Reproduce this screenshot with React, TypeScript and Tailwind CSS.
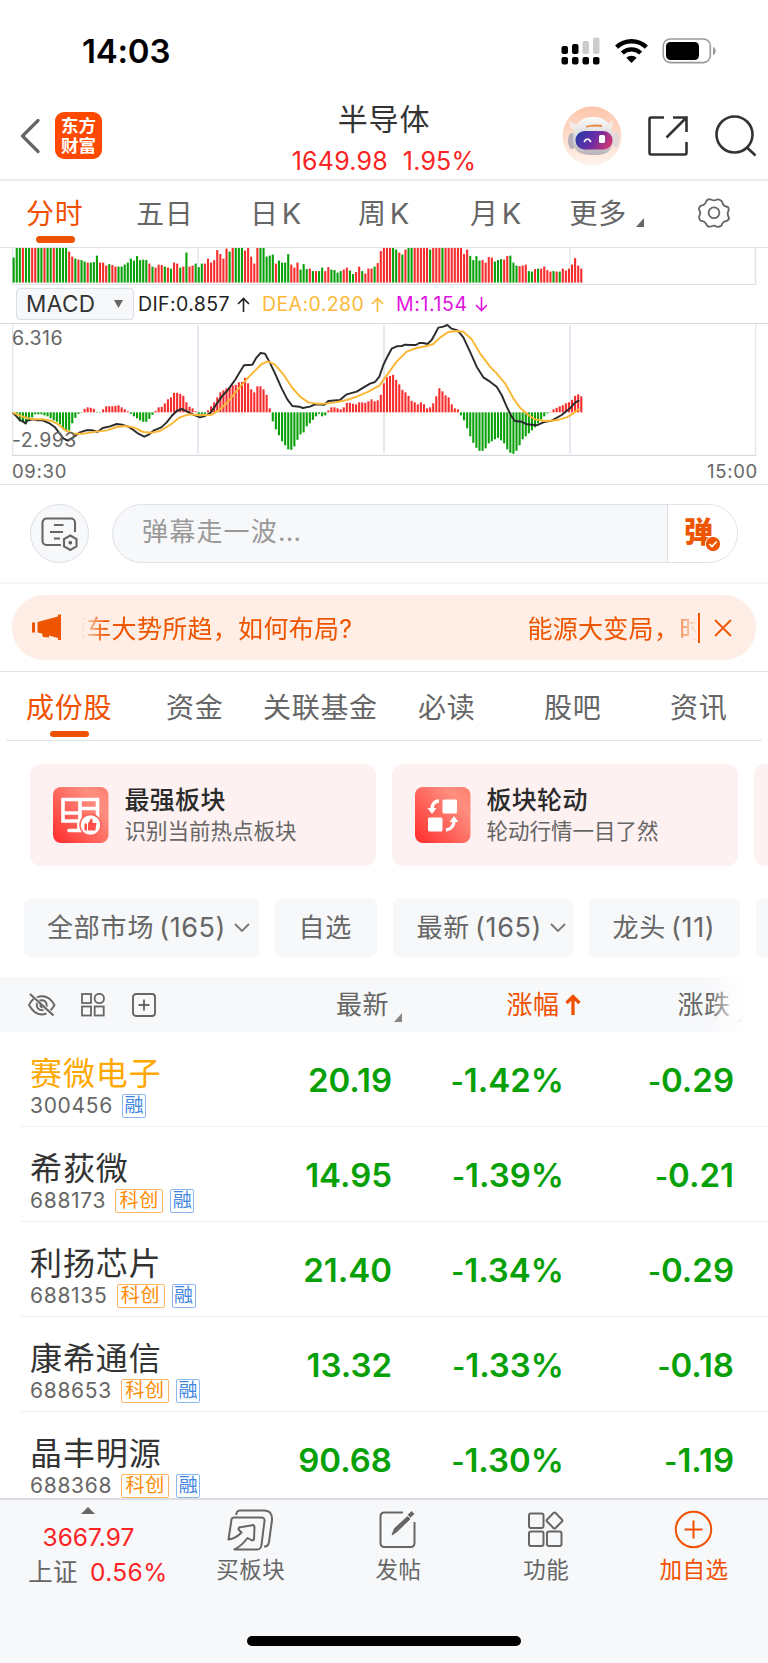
import React from 'react';

type Dir = 'R' | 'G';

const BAR_STEP = 3.085;
const CHART_LEFT = 12.6;

// Height in px for every minute of the session, clipped at the top edge
const VOLUME_HEIGHTS = [
  25, 36, 36, 36, 36, 36, 36, 36, 36, 36, 36, 36, 36, 36, 36, 36, 36, 36, 31, 26, 24, 23, 22.5, 21, 20, 20, 20.5, 27,
  20, 20, 17, 18.5, 17.5, 16, 16, 16, 18, 20, 24, 22, 26.5, 22.5, 23, 22.5, 19, 16, 15, 18, 17.5, 16, 15, 14, 20, 19,
  15, 16, 30, 16, 17, 19, 15.5, 19, 19, 24, 20, 22.5, 32.5, 28.5, 24, 34, 31, 36, 36, 36, 36, 32, 36, 26, 19, 36, 36,
  36, 26, 27, 28, 19, 22, 20, 20, 28.5, 18, 15, 20, 13, 18.5, 13.5, 14, 11.5, 11.5, 11.5, 15, 11.5, 15.5, 13, 12.5,
  10, 11.5, 13, 15, 12, 8.5, 10.5, 16, 11.5, 9, 14, 14, 16, 19.5, 31.5, 36, 36, 36, 36, 33, 30, 28, 33, 36, 36, 36,
  36, 36, 36, 36, 33, 36, 36, 36, 36, 36, 36, 36, 36, 36, 36, 28.5, 33, 26.5, 22.5, 26.5, 22, 22.5, 20, 25.5, 25, 21,
  22.5, 23.5, 23, 26.5, 27, 20, 17, 16.5, 17, 18, 11.5, 11, 13.5, 14, 14, 16, 12.5, 11, 11.5, 11, 11, 14, 12, 14, 18,
  24.5, 17, 14,
];
const VOLUME_DIRS =
  'GGGRGGRRGGRGGRGGGG' +
  'RRGRGGRGGGRRRGRRGGGGGGGGGG' +
  'RGRRRGRGRRGRGRRGGGRRRRRRRRGRGGGRRRRRGGGGGRGGGGRRR' +
  'GGGRGRGGRRGGGGRRGGRRGRRRGRRRRRGGRGRGGRRRRRGRRRGRRRRRRR' +
  'RGGGGRRRRGGGRRGGGRRRGGRGRRRRGRGRRRRRRRG';

const MACD_BARS = [
  0, -2, -9, -10, -12, -9, -5, -2, -2, -2, -3, -4, -6, -8, -9.5, -12, -17, -19, -18, -11, -5.5, -1.5, 0, 3.5, 5, 4.5,
  3.5, 0, 0, 3, 6, 6, 6, 6.5, 7, 5, 3, 1, -1.5, -4, -6, -8, -9.5, -9.5, -6.5, -2.5, 1.5, 5, 5.5, 9, 13, 15, 19.5,
  19.5, 18.5, 16.5, 10, 5.5, 4, 1, -2, -2.5, -1.5, 2, 6, 10, 15, 20, 22, 24, 25, 27, 27.5, 30, 30.5, 34.5, 29, 23, 20,
  26, 26, 23, 17.5, 4, -9, -17, -23, -29, -33, -37, -37.5, -34, -27.5, -22, -20, -14, -11, -7.5, -4, -1.5, -4, -3, 2,
  5, 5, 4, 3, 5, 9.5, 9.5, 8.5, 8, 10, 10, 9.5, 11, 13, 11, 12, 17.5, 29, 35, 36.5, 37.5, 32.5, 28, 22.5, 20, 16.5,
  11.5, 10, 8, 10, 8, 4, 5, 9, 16, 24, 21, 17, 15, 8, 4, 3, -3, -8, -16, -24, -30.5, -35.5, -38.5, -38.5, -36, -31,
  -29, -27, -25.5, -28, -31, -37, -40.5, -41.5, -38.5, -33, -27, -24, -21, -18, -15, -11, -7, -4, -1, 0.5, 3, 4.5, 6,
  7, 9, 10, 12.5, 16.5, 18, 16,
];

// Both curves are plotted on a 3x grid
const DIF_LINE =
  '38,266 50,278 60,289 68,291 75,298 83,289 100,286 112,289 128,289 150,299 165,310 180,330 190,343 203,350 220,340 240,325 258,319 278,319 292,324 308,312 330,307 350,300 366,302 385,308 400,318 415,329 433,338 448,331 462,319 484,310 500,295 515,276 530,261 545,255 560,262 580,272 600,280 615,276 632,266 650,240 665,218 685,196 705,168 720,143 732,124 757,122 770,100 782,87 795,89 808,113 825,148 845,193 862,226 877,246 898,248 908,252 930,248 945,241 973,242 985,231 1020,228 1040,211 1070,203 1095,188 1110,179 1125,174 1138,158 1150,123 1162,98 1175,74 1190,67 1205,66 1215,62 1232,63 1248,63 1258,57 1270,57 1282,60 1295,48 1305,30 1315,11 1330,8 1342,3 1355,14 1373,19 1390,40 1410,83 1430,128 1450,160 1470,173 1490,188 1505,213 1520,248 1535,278 1545,291 1565,293 1580,301 1610,304 1630,295 1655,290 1685,273 1710,253 1725,236 1738,229';
const DEA_LINE =
  '38,266 60,275 80,282 100,286 130,286 155,291 175,301 195,318 220,329 250,329 290,323 320,319 350,309 375,306 400,310 430,324 455,326 480,321 510,303 540,280 565,271 600,274 635,272 655,260 680,238 700,213 725,183 745,160 765,140 785,120 803,112 825,122 850,151 875,189 900,218 925,235 950,239 975,239 1005,235 1040,228 1070,218 1105,203 1138,185 1160,154 1190,113 1220,83 1250,72 1280,66 1300,60 1320,41 1345,24 1370,21 1390,23 1415,46 1440,88 1470,128 1490,148 1515,178 1540,223 1560,251 1585,273 1605,286 1635,291 1670,289 1700,280 1720,268 1738,254';

const STOCKS = [
  { name: '赛微电子', code: '300456', star: false, held: true, price: '20.19', pct: '1.42%', diff: '0.29' },
  { name: '希荻微', code: '688173', star: true, held: false, price: '14.95', pct: '1.39%', diff: '0.21' },
  { name: '利扬芯片', code: '688135', star: true, held: false, price: '21.40', pct: '1.34%', diff: '0.29' },
  { name: '康希通信', code: '688653', star: true, held: false, price: '13.32', pct: '1.33%', diff: '0.18' },
  { name: '晶丰明源', code: '688368', star: true, held: false, price: '90.68', pct: '1.30%', diff: '1.19' },
];

export default function App() {
  return (
    <div className="flex h-[1663px] w-[768px] flex-col overflow-hidden bg-white font-['Inter','Noto_Sans_CJK_SC',sans-serif] text-[#666]">
      <StatusBar />
      <Header />
      <PeriodTabs />
      <VolumeChart />
      <MacdLegend />
      <MacdChart />
      <div className="flex h-[29px] shrink-0 items-center justify-between border-b border-[#e2e4e9] pl-3 pr-[10px] pt-[2px] text-[18.5px] leading-none tracking-[0.7px]">
        <span>09:30</span>
        <span>15:00</span>
      </div>
      <DanmuBar />
      <Notice />
      <SectionTabs />
      <Cards />
      <Filters />
      <TableHead />
      <div className="h-[466px] shrink-0 overflow-hidden">
        {STOCKS.map((s) => (
          <StockRow key={s.code} stock={s} />
        ))}
      </div>
      <BottomBar />
    </div>
  );
}

// ── Top area ──────────────────────────────────────────────────────────────────

function StatusBar() {
  return (
    <div className="flex h-24 shrink-0 items-start justify-between pl-[82px] pr-[51px] pt-9">
      <span className="text-[33px] font-semibold leading-[31px] tracking-[-0.2px] text-black">14:03</span>
      <div className="flex">
        <svg width="40" height="30" viewBox="0 0 40 30" className="mr-3.5">
          <rect x="0.5" y="10" width="6.5" height="8" rx="2" fill="#000" />
          <rect x="11" y="8" width="6.5" height="10" rx="2" fill="#000" />
          <rect x="21.5" y="5" width="6.5" height="13" rx="2" fill="#ccc" />
          <rect x="32" y="1.5" width="6.5" height="16.5" rx="2" fill="#ccc" />
          {[0.5, 11, 21.5, 32].map((x) => (
            <rect key={x} x={x} y="21" width="6.5" height="7.5" rx="2" fill="#000" />
          ))}
        </svg>
        <svg width="33" height="30" viewBox="0 0 33 30" className="mr-3.5">
          <g fill="none" stroke="#000" strokeWidth="4.4">
            <path d="M1.6 11.2a21.5 21.5 0 0 1 29.8 0" />
            <path d="M7.3 17a13.4 13.4 0 0 1 18.4 0" />
          </g>
          <path d="M16.5 27l-5.2-5.2a7.4 7.4 0 0 1 10.4 0z" fill="#000" />
        </svg>
        <svg width="55" height="30" viewBox="0 0 55 30">
          <rect x="1.3" y="3" width="47" height="23.6" rx="7" fill="none" stroke="#999" strokeWidth="1.6" />
          <rect x="4" y="6" width="33" height="18" rx="4.5" fill="#000" />
          <path d="M51 11c3.6 1 3.6 7 0 8z" fill="#999" />
        </svg>
      </div>
    </div>
  );
}

function Header() {
  return (
    <div className="flex h-[85px] shrink-0 items-start border-b-2 border-[#ececee]">
      <svg width="20" height="36" viewBox="0 0 20 36" className="ml-5 mt-[22px]">
        <path d="M18 2.5L2.5 18L18 33.5" fill="none" stroke="#666" strokeWidth="3.2" strokeLinecap="round" strokeLinejoin="round" />
      </svg>
      <div className="ml-[15px] mt-4 flex size-[47px] flex-col items-center justify-center rounded-[9px] bg-[#ff4800] text-[17.5px] font-bold leading-[19.5px] text-white">
        <span>东方</span>
        <span>财富</span>
      </div>
      <div className="ml-[172px] flex w-[220px] flex-col items-center">
        <span className="mt-2 text-[30px] leading-[31px] tracking-[0.8px] text-[#333]">半导体</span>
        <span className="mt-3 text-[25px] leading-[28px] tracking-[0.2px] text-[#fb2323]">
          1649.98<span className="ml-[15px]">1.95%</span>
        </span>
      </div>
      <Robot />
      <svg width="42" height="42" viewBox="0 0 42 42" className="ml-[25px] mt-[19px]" fill="none" stroke="#333" strokeWidth="2.6">
        <path d="M17 2.5H4a1.5 1.5 0 0 0-1.5 1.5V38A1.5 1.5 0 0 0 4 39.5H38a1.5 1.5 0 0 0 1.500-1.500V27M26 2.500H39.500V17M39.500 2.500L19.500 22.500" />
      </svg>
      <svg width="44" height="44" viewBox="0 0 44 44" className="ml-[25px] mt-[18px]" fill="none" stroke="#333" strokeWidth="2.6">
        <circle cx="20.5" cy="20.5" r="18" />
        <path d="M33 33.5l8.500 8" />
      </svg>
    </div>
  );
}

function Robot() {
  return (
    <svg width="60" height="60" viewBox="0 0 60 60" className="ml-[68px] mt-[10px]">
      <defs>
        <linearGradient id="sky" x1="0" y1="0" x2="0" y2="1">
          <stop offset="0" stopColor="#fdc5ab" />
          <stop offset="1" stopColor="#fff3ec" />
        </linearGradient>
        <linearGradient id="visor" x1="0" y1="0.3" x2="1" y2="0.6">
          <stop offset="0" stopColor="#2a3aa8" />
          <stop offset="0.5" stopColor="#6a2ca6" />
          <stop offset="1" stopColor="#d03870" />
        </linearGradient>
        <linearGradient id="shell" x1="0" y1="0" x2="0" y2="1">
          <stop offset="0" stopColor="#fdfdfd" />
          <stop offset="1" stopColor="#b9b4b8" />
        </linearGradient>
      </defs>
      <circle cx="30" cy="30" r="29.5" fill="url(#sky)" />
      <path d="M7 14c0 7 3 11 9 12l6-9c-7 3-12 1-15-3zM51 14c0 7-2 11-7 12l-6-9c6 3 10 1 13-3z" fill="#f4ebe8" />
      <ellipse cx="10" cy="35" rx="4" ry="8" fill="#b5b1b9" />
      <ellipse cx="54" cy="34" rx="3.5" ry="8" fill="#e2d9da" />
      <path d="M11 34c0-15 7-23 20-23s20 8 20 22-8 16-20 16-20-3-20-15z" fill="url(#shell)" />
      <path d="M24 20q7-2.500 16-1v2q-9-1-16 .6z" fill="#e98a3a" />
      <rect x="13.500" y="25" width="37" height="18.5" rx="9" fill="url(#visor)" />
      <path d="M22 36q3.500-6 7 0" fill="none" stroke="#fff" strokeWidth="1.7" />
      <rect x="37" y="29" width="6" height="8" rx="1.5" fill="#fff" />
    </svg>
  );
}

function PeriodTabs() {
  return (
    <div className="flex h-[67px] shrink-0 items-start border-b-[1.5px] border-[#dfe1e6] pl-[26px] pt-[17px] text-[28px] leading-[32px] tracking-[0.7px]">
      <span className="relative w-[110px] text-[#f05000]">
        分时
        <i className="absolute left-[9.5px] top-[38px] h-[6.5px] w-[39.5px] rounded-full bg-[#ee5200]" />
      </span>
      <span className="w-[114px]">五日</span>
      <span className="w-[108px]">日<Kay /></span>
      <span className="w-[112px]">周<Kay /></span>
      <span className="w-[99.5px]">月<Kay /></span>
      <span className="w-[66px]">更多</span>
      <Corner className="mt-[20px] text-[#666]" />
      <svg width="34" height="32" viewBox="0 0 34 32" className="ml-[53px] mt-[-1px]" fill="none" stroke="#666" strokeWidth="1.8">
        <path d="M13 2.300Q17 4.300 21 2.300Q25.500 3 25.800 7Q27 9.500 31 10Q32.600 13 30.600 15.800Q30.600 18.500 32 21Q31.500 24 27 24.700Q25 26 24.600 28.500Q21 31 18 28.800Q16.500 28.400 14 29.500Q10 30.500 9 26.500Q7.500 24.200 3.500 23.700Q1 20.500 3 17.500Q4 15.500 2 12.500Q1.500 9 6.500 7.900Q8.500 7 9.500 3.800Q10.800 2 13 2.300z" />
        <circle cx="17" cy="15.8" r="5.4" />
      </svg>
    </div>
  );
}

function Kay() {
  return <span className="ml-[3px] text-[29px]">K</span>;
}

function Corner({ className }: { className: string }) {
  return (
    <svg width="8" height="9" viewBox="0 0 8 9" className={className}>
      <path d="M8 0V9H0z" fill="currentColor" />
    </svg>
  );
}

// ── Charts ────────────────────────────────────────────────────────────────────

function barColor(dir: Dir) {
  return dir === 'R' ? '#f62d2d' : '#0aa00a';
}

function VolumeChart() {
  return (
    <svg width="768" height="37" viewBox="0 248 768 37" className="block shrink-0">
      <path d="M12.500 248V284M755.500 248V284M384 248V283M198 248V283M570 248V283" stroke="#e0e4ea" strokeWidth="1.4" />
      {VOLUME_HEIGHTS.map((h, i) => (
        <rect key={i} x={CHART_LEFT + i * BAR_STEP} y={282.6 - h} width="2.1" height={h} fill={barColor((VOLUME_DIRS[i] ?? 'R') as Dir)} />
      ))}
      <path d="M12 284.500H756" stroke="#dfe1e6" />
    </svg>
  );
}

function MacdLegend() {
  return (
    <div className="flex h-[39px] shrink-0 items-center border-b border-[#d8dade] pl-4 text-[19.5px] leading-none">
      <div className="flex h-8 w-[118px] items-center justify-between rounded border-[1.5px] border-[#dcdfe4] bg-[#f7f8fa] pl-[9px] pr-[10px] text-[22.5px] tracking-[0.4px] text-[#333]">
        MACD
        <svg width="9" height="8" viewBox="0 0 9 8">
          <path d="M0 0H9L4.500 8z" fill="#666" />
        </svg>
      </div>
      <span className="ml-[4px] mt-[1px] flex w-[124px] items-center tracking-[0.4px] text-[#222]">
        DIF:0.857 <Arrow up />
      </span>
      <span className="mt-[1px] flex w-[134px] items-center tracking-[0.4px] text-[#fdb93a]">
        DEA:0.280 <Arrow up />
      </span>
      <span className="mt-[1px] flex items-center tracking-[0.6px] text-[#e012e0]">
        M:1.154 <Arrow />
      </span>
    </div>
  );
}

function Arrow({ up = false }: { up?: boolean }) {
  return (
    <svg width="13" height="15" viewBox="0 0 13 15" className="ml-[7px]" fill="none" stroke="currentColor" strokeWidth="1.6">
      <path d={up ? 'M6.500 15V1.500M1 7L6.500 1.500L12 7' : 'M6.500 0V13.500M1 8L6.500 13.500L12 8'} />
    </svg>
  );
}

function MacdChart() {
  return (
    <div className="relative h-[132px] shrink-0">
      <svg width="768" height="132" viewBox="0 0 2304 396" className="block">
        <g stroke="#e0e4ec" strokeWidth="5">
          <path d="M594 4V388M1152 4V388M1710 4V388" />
          <path d="M38 0V394M2267 0V394" strokeWidth="3.5" />
          <path d="M36 394H2268" stroke="#d8dade" strokeWidth="4" />
        </g>
        {MACD_BARS.map((v, i) => {
          const h = Math.max(Math.abs(v), 0.4) * 3;
          return (
            <rect
              key={i}
              x={(CHART_LEFT + i * BAR_STEP) * 3}
              y={v > 0 ? 265 - h : 265}
              width="6.3"
              height={h}
              fill={barColor(v > 0 ? 'R' : 'G')}
            />
          );
        })}
        <polyline points={DIF_LINE} fill="none" stroke="#2b2b2b" strokeWidth="5.8" strokeLinejoin="round" />
        <polyline points={DEA_LINE} fill="none" stroke="#fbb733" strokeWidth="5.8" strokeLinejoin="round" />
      </svg>
      <span className="absolute left-3 top-1 text-[19.5px] leading-[20px] tracking-[0.5px]">6.316</span>
      <span className="absolute left-3 top-[106px] text-[19.5px] leading-[20px] tracking-[0.5px]">-2.993</span>
    </div>
  );
}

// ── Danmu + notice ────────────────────────────────────────────────────────────

function DanmuBar() {
  return (
    <div className="flex h-[99px] shrink-0 items-start border-b-2 border-[#f5f5f7] pl-[30px] pt-[19px]">
      <div className="flex size-[59px] items-center justify-center rounded-full border border-[#dcdee5] bg-[#f7f8fa]">
        <svg width="38" height="34" viewBox="0 0 38 34" fill="none" stroke="#666" strokeWidth="2.1" className="ml-[1px] mt-[1px]">
          <path d="M20 28H5.500A4 4 0 0 1 1.500 24V5.500A4 4 0 0 1 5.500 1.500H30A4 4 0 0 1 34 5.500V15" />
          <path d="M13 8H22.500M9 15H22M13 21.500H19" />
          <path d="M29.300 18.500L35.500 22V29.500L29.300 33L23 29.500V22z" />
          <circle cx="29.3" cy="25.7" r="1.9" fill="#666" stroke="none" />
        </svg>
      </div>
      <div className="ml-[23px] flex h-[59px] w-[626px] overflow-hidden rounded-full border-[1.5px] border-[#dfe1e7] bg-[#f7f8fa]">
        <span className="flex-1 pl-[29px] pt-[9px] text-[26px] leading-[36px] tracking-[1.2px] text-[#999]">
          弹幕走一波<span className="tracking-[0.2px]">...</span>
        </span>
        <div className="flex w-[70px] items-start border-l-[1.5px] border-[#dfe1e7] bg-white pl-[16px] pt-[14px]">
          <span className="text-[29px] font-black leading-[28px] text-[#ee5500]">弹</span>
          <svg width="16" height="16" viewBox="0 0 16 16" className="-ml-2 mt-[17px]">
            <circle cx="8" cy="8" r="7.6" fill="#ee5500" stroke="#fff" strokeWidth="1" />
            <path d="M4.500 8L7 10.500L11.700 5.500" fill="none" stroke="#fff" strokeWidth="1.7" />
          </svg>
        </div>
      </div>
    </div>
  );
}

function Notice() {
  return (
    <div className="h-[88px] shrink-0 border-b border-[#dfe1e6] px-3 pt-[11px]">
      <div className="flex h-[65px] items-center rounded-[32px] bg-[#feeee6] pl-[19px] text-[#ee5500]">
        <svg width="31" height="28" viewBox="0 0 31 28" fill="currentColor" className="mt-[-2px]">
          <path d="M1 9.500H4V19.500H1zM6.500 9L27 3.500V1.500H30V27H27V25L18 22.500V24.500L12 24L11 20.500L6.500 19.500z" />
        </svg>
        <div className="ml-[19px] w-[617px] overflow-hidden whitespace-nowrap pt-[3px] text-[25px] leading-[36px] tracking-[0.3px] [mask-image:linear-gradient(90deg,transparent,#000_24px,#000_590px,transparent_617px)]">
          <span className="-ml-[20px]">源车大势所趋，如何布局?</span>
          <span className="ml-[175px]">能源大变局，时</span>
        </div>
        <i className="h-[30px] w-[1.5px] bg-current" />
        <svg width="18" height="18" viewBox="0 0 18 18" fill="none" stroke="currentColor" strokeWidth="1.8" className="ml-[14px]">
          <path d="M1 1L17 17M17 1L1 17" />
        </svg>
      </div>
    </div>
  );
}

function SectionTabs() {
  return (
    <div className="mx-1.5 flex h-[69px] shrink-0 items-start border-b border-[#e2e3e6] pl-5 pt-[19px] text-[28px] leading-[34px] tracking-[0.7px]">
      <span className="relative w-[140px] text-[#f05000]">
        成份股
        <i className="absolute left-[23.5px] top-[40px] h-[6px] w-[39.5px] rounded-full bg-[#ee5200]" />
      </span>
      <span className="w-[97px]">资金</span>
      <span className="w-[155px]">关联基金</span>
      <span className="w-[126px]">必读</span>
      <span className="w-[126px]">股吧</span>
      <span>资讯</span>
    </div>
  );
}

// ── Cards and filters ─────────────────────────────────────────────────────────

function Cards() {
  return (
    <div className="flex h-[157px] shrink-0 gap-4 overflow-hidden pl-[30px] pt-[23px]">
      <Card title="最强板块" desc="识别当前热点板块">
        <path d="M10 12.500H44.500V34H10zM10 26H28M27 12.500V34M27 21.500H44" fill="none" stroke="#fff" strokeWidth="3.6" />
        <path d="M16 43.500H30M26 36V43" stroke="#fff" strokeWidth="3.6" strokeLinecap="round" />
        <circle cx="37.5" cy="38" r="10.5" fill="#fff" stroke="#ff6158" strokeWidth="1.5" />
        <path d="M31.500 36.500H34V43.500H31.500zM35 36.500L38 31.500Q40 31.500 39.500 36H43.500L42.300 43.500H35z" fill="#ff5048" />
      </Card>
      <Card title="板块轮动" desc="轮动行情一目了然">
        <rect x="27.5" y="12.5" width="14.5" height="14" rx="1.5" fill="#fff" />
        <rect x="13" y="30.5" width="14.5" height="14" rx="1.5" fill="#fff" />
        <path d="M24 14Q17.500 14 17 22" fill="none" stroke="#fff" strokeWidth="3.3" />
        <path d="M12.500 21H21.500L17 27zM34.500 35H43.500L39 29z" fill="#fff" />
        <path d="M31 43Q38.500 42 39 34.500" fill="none" stroke="#fff" strokeWidth="3.3" />
      </Card>
      <div className="h-[102px] w-[346px] shrink-0 rounded-[11px] bg-[#fef1f1]" />
    </div>
  );
}

function Card({ title, desc, children }: { title: string; desc: string; children: React.ReactNode }) {
  return (
    <div className="flex h-[102px] w-[346px] shrink-0 rounded-[11px] bg-[#fef1f1] pl-[23px]">
      <svg width="56" height="56" viewBox="0 0 56 56" className="mt-[23px]">
        <defs>
          <linearGradient id="cardRed" x1="0" y1="1" x2="1" y2="0.1">
            <stop offset="0" stopColor="#ff2b2b" />
            <stop offset="0.8" stopColor="#ff8f80" />
            <stop offset="1" stopColor="#ff8272" />
          </linearGradient>
        </defs>
        <rect width="55.5" height="56" rx="8" fill="url(#cardRed)" />
        {children}
      </svg>
      <div className="ml-[15.5px] flex flex-col">
        <span className="mt-5 text-[25px] font-medium leading-[32px] tracking-[0.3px] text-[#2b2b2b]">{title}</span>
        <span className="mt-[1px] text-[21.5px] leading-[28px]">{desc}</span>
      </div>
    </div>
  );
}

function Filters() {
  return (
    <div className="flex h-[79px] shrink-0 gap-4 overflow-hidden text-[26px] leading-[60px] tracking-[0.8px]">
      <Chip className="ml-6 w-[234.5px] pl-[23px]" label="全部市场" count="165" menu />
      <Chip className="w-[102px] pl-6" label="自选" />
      <Chip className="w-[180px] pl-6" label="最新" count="165" menu />
      <Chip className="w-[151px] pl-6" label="龙头" count="11" />
      <Chip className="w-[120px]" label="" />
    </div>
  );
}

function Chip({ className, label, count, menu }: { className: string; label: string; count?: string; menu?: boolean }) {
  return (
    <div className={`flex h-[59px] shrink-0 items-center rounded-[7px] bg-[#f7f8fa] whitespace-nowrap ${className}`}>
      {label}
      {count && <span className="ml-[5px] text-[27px] tracking-[0.6px]">({count})</span>}
      {menu && (
        <svg width="16" height="10" viewBox="0 0 16 10" className="ml-2" fill="none" stroke="#777" strokeWidth="1.8">
          <path d="M1 1L8 8L15 1" />
        </svg>
      )}
    </div>
  );
}

// ── Stock table ───────────────────────────────────────────────────────────────

function TableHead() {
  return (
    <div className="relative flex h-[55px] shrink-0 items-start bg-[#f7f8fa] pl-7 pt-3 text-[26px] leading-[32px] tracking-[0.5px]">
      <svg width="28" height="24" viewBox="0 0 28 24" fill="none" stroke="#666" strokeWidth="1.9" className="mt-1">
        <path d="M2 1L25.500 22.500" strokeWidth="2.2" />
        <path d="M9 4.200Q20 .5 26.500 12Q25 15 22.500 17.200M5.500 6Q2.500 8.500 1 12Q8 24.500 18.500 20.500" />
        <path d="M11.500 7.500Q19 6 18.800 13.500M8.800 10Q8 17.500 15.500 17.300M12.500 11.500Q12 14 14.500 14.500" />
      </svg>
      <svg width="24" height="24" viewBox="0 0 24 24" fill="none" stroke="#666" strokeWidth="1.8" className="ml-[25px] mt-1">
        <rect x="1" y="1" width="9" height="9" />
        <circle cx="18.3" cy="5.5" r="4.7" />
        <rect x="1" y="13.5" width="9" height="9" />
        <rect x="13.7" y="13.5" width="9" height="9" />
      </svg>
      <svg width="24" height="24" viewBox="0 0 24 24" fill="none" stroke="#666" strokeWidth="1.9" className="ml-[27px] mt-1">
        <rect x="1" y="1" width="22" height="22" rx="3" />
        <path d="M12 6.500V17.500M6.500 12H17.500" />
      </svg>
      <span className="ml-[180px]">最新</span>
      <Corner className="ml-[5px] mt-6 text-[#888]" />
      <span className="ml-[104.5px] text-[#f05000]">涨幅</span>
      <svg width="16" height="22" viewBox="0 0 16 22" className="ml-[5px] mt-[5px]" fill="none" stroke="#f05000" strokeWidth="3.3">
        <path d="M8 21V2.500M1.500 9L8 2.500L14.500 9" />
      </svg>
      <span className="ml-[97px]">涨跌</span>
      <Corner className="ml-[6px] mt-6 text-[#888]" />
      <i className="absolute right-0 top-0 h-[55px] w-[60px] bg-linear-to-r from-white/0 to-white to-60%" />
    </div>
  );
}

function StockRow({ stock }: { stock: (typeof STOCKS)[number] }) {
  return (
    <div className="ml-5 flex h-[95px] border-b border-[#f0f0f2] pl-[10px]">
      <div className="w-[232px]">
        <div className={`mt-[21.5px] text-[32px] leading-[40px] tracking-[0.9px] ${stock.held ? 'text-[#ffa800]' : 'text-[#333]'}`}>
          {stock.name}
        </div>
        <div className="flex h-[24px] items-center text-[21px] leading-none tracking-[0.7px]">
          {stock.code}
          {stock.star && (
            <span className="ml-[9px] h-6 w-12 rounded-[2px] border-[1.5px] border-[#ffb466] text-center text-[19px] leading-[22px] text-[#ff8a00]">科创</span>
          )}
          <span className={`${stock.star ? 'ml-[7px]' : 'ml-[9px]'} h-6 w-6 rounded-[2px] border-[1.5px] border-[#8bb6ee] text-center text-[19px] leading-[22px] tracking-normal text-[#3f86e0]`}>
            融
          </span>
        </div>
      </div>
      <Value className="w-[130px]">{stock.price}</Value>
      <Value className="w-[172px]" negative>{stock.pct}</Value>
      <Value className="w-[170px]" negative>{stock.diff}</Value>
    </div>
  );
}

function Value({ className, negative, children }: { className: string; negative?: boolean; children: React.ReactNode }) {
  return (
    <span className={`pt-[28px] text-right text-[33px] font-semibold leading-[40px] text-[#07a007] ${className}`}>
      {negative && <span className="text-[28px]">-</span>}
      {children}
    </span>
  );
}

// ── Bottom bar ────────────────────────────────────────────────────────────────

function BottomBar() {
  return (
    <div className="flex h-[165px] shrink-0 flex-col items-center border-t-2 border-[#dcdee2] bg-[#f7f8fa]">
      <div className="flex h-[136px] w-full text-[22.5px] leading-[28px] tracking-[0.5px]">
        <div className="ml-[19px] flex w-[158px] flex-col items-center">
          <svg width="14" height="7" viewBox="0 0 14 7" className="mr-[19px] mt-[7px]">
            <path d="M0 7L7 0L14 7z" fill="#666" />
          </svg>
          <span className="mr-[19px] mt-[9px] text-[24.5px] tracking-normal text-[#fb2323]">3667.97</span>
          <span className="mt-[7px] text-[24.5px] tracking-[0.4px]">
            上证<span className="ml-3 text-[#fb2323]">0.56%</span>
          </span>
        </div>
        <NavItem label="买板块">
          <path d="M10 6L10.800 3.500Q11.500 1.500 14 1.500H38Q46.500 1.500 46 11L43 33Q42 38 38 37.500" />
          <path d="M2.500 30.500L5.500 10.500Q6 8.500 8 8.500H35Q39 8.500 38.500 12L35.500 36Q35 40.500 31 40.500H8.500Q16 36.500 21.500 29L26 31.500L28 30.500L28.500 18L27.500 16L13 18.500L12.500 20.500L15.500 23.500Q10 29.500 2.500 30.500z" />
        </NavItem>
        <NavItem label="发帖">
          <path d="M29 3.500H10.500Q6.500 3.500 6.500 7.500V34Q6.500 38 10.500 38H36.500Q40.500 38 40.500 34V13" />
          <path d="M18 26L20.500 19.500L33.500 7.500L36 10L23 22.500z" fill="#666" strokeWidth="1" />
          <path d="M35 7.200L39 3.500" strokeWidth="4" />
        </NavItem>
        <NavItem label="功能">
          <rect x="7" y="4.5" width="14.5" height="14.5" rx="2" />
          <rect x="7" y="22.5" width="14.5" height="14.5" rx="2" />
          <rect x="25" y="22.5" width="14.5" height="14.5" rx="2" />
          <rect x="26.5" y="5.5" width="12" height="12" rx="1.5" transform="rotate(45 32.5 11.5)" />
        </NavItem>
        <NavItem label="加自选" active>
          <circle cx="23.5" cy="20.5" r="17.7" />
          <path d="M23.500 11.500V29.500M14.500 20.500H32.500" />
        </NavItem>
      </div>
      <i className="h-[10px] w-[274px] rounded-full bg-black" />
    </div>
  );
}

function NavItem({ label, active, children }: { label: string; active?: boolean; children: React.ReactNode }) {
  return (
    <div className={`flex w-[148px] flex-col items-center ${active ? 'text-[#f05000]' : 'text-[#666]'}`}>
      <svg width="48" height="42" viewBox="0 0 48 42" className="-ml-[1px] mt-[9px]" fill="none" stroke="currentColor" strokeWidth="2" strokeLinejoin="round">
        {children}
      </svg>
      <span className="mt-[5px]">{label}</span>
    </div>
  );
}
